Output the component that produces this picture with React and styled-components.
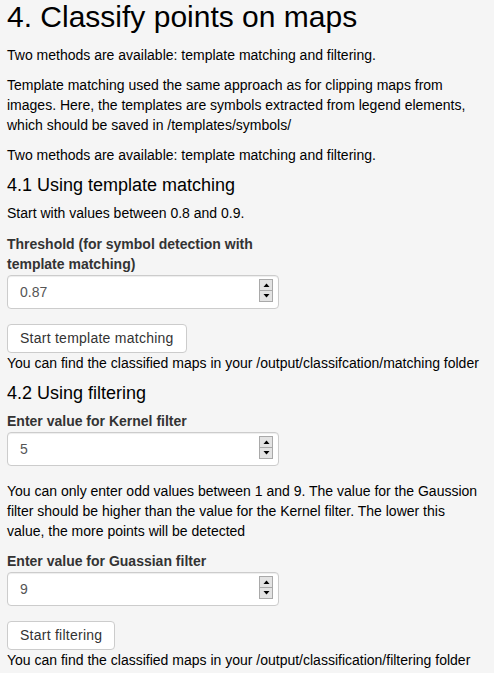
import React from 'react';
import styled, { createGlobalStyle } from 'styled-components';

const GlobalStyle = createGlobalStyle`
  html, body {
    margin: 0;
    padding: 0;
    background: #f5f5f5;
  }
  body {
    font-family: "Liberation Sans", Arial, Helvetica, sans-serif;
    font-size: 14px;
    line-height: 20px;
    color: #000;
  }
  * { box-sizing: border-box; }
`;

const Page = styled.main`
  padding: 0 11px 0 7px;
`;

const Title = styled.h2`
  font-size: 30px;
  font-weight: 400;
  line-height: 33px;
  margin: 0 0 12px;
  color: #000;
`;

const Subtitle = styled.h4`
  font-size: 18px;
  font-weight: 400;
  line-height: 19.8px;
  margin: 11px 0 7px;
  color: #000;
`;

const Text = styled.p`
  margin: 0 0 ${(p) => (p.$mb !== undefined ? p.$mb : 10)}px;
`;

const FormGroup = styled.div`
  width: 272px;
  margin-bottom: 15px;
`;

const Label = styled.label`
  display: block;
  font-weight: 700;
  color: #333;
  margin-bottom: 1px;
`;

const InputWrap = styled.div`
  position: relative;
`;

const NumberInput = styled.input`
  display: block;
  width: 100%;
  height: 34px;
  padding: 6px 12px;
  font-family: inherit;
  font-size: 14px;
  line-height: 20px;
  color: #555;
  background: #fff;
  border: 1px solid #ccc;
  border-radius: 4px;
  box-shadow: inset 0 1px 1px rgba(0, 0, 0, 0.075);
  outline: none;
`;

const Spinner = styled.div`
  position: absolute;
  top: 4px;
  right: 6px;
  width: 14px;
  height: 23px;
  display: flex;
  flex-direction: column;
  border: 1px solid #a9a9a9;
  background: #e3e3e3;
`;

const SpinButton = styled.div`
  flex: 1;
  display: flex;
  align-items: center;
  justify-content: center;
  border-top: ${(p) => (p.$down ? '1px solid #a9a9a9' : 'none')};
`;

const Button = styled.button`
  display: block;
  width: fit-content;
  padding: 4px 12px;
  font-family: inherit;
  font-size: 14px;
  line-height: 19px;
  letter-spacing: 0.25px;
  color: #333;
  background: #fff;
  border: 1px solid #ccc;
  border-radius: 4px;
  cursor: pointer;
`;

const Arrow = ({ down }) => (
  <svg width="7" height="4" viewBox="0 0 7 4">
    {down ? <polygon points="0.5,0 6.5,0 3.5,3.5" fill="#000" /> : <polygon points="3.5,0.5 6.5,4 0.5,4" fill="#000" />}
  </svg>
);

const NumberField = ({ label, value }) => (
  <FormGroup>
    <Label>{label}</Label>
    <InputWrap>
      <NumberInput type="text" defaultValue={value} />
      <Spinner>
        <SpinButton>
          <Arrow />
        </SpinButton>
        <SpinButton $down>
          <Arrow down />
        </SpinButton>
      </Spinner>
    </InputWrap>
  </FormGroup>
);

export default function App() {
  return (
    <>
      <GlobalStyle />
      <Page>
        <Title>4. Classify points on maps</Title>
        <Text>Two methods are available: template matching and filtering.</Text>
        <Text>
          Template matching used the same approach as for clipping maps from images. Here, the templates are symbols
          extracted from legend elements, which should be saved in /templates/symbols/
        </Text>
        <Text>Two methods are available: template matching and filtering.</Text>

        <Subtitle>4.1 Using template matching</Subtitle>
        <Text $mb={11}>Start with values between 0.8 and 0.9.</Text>
        <NumberField label="Threshold (for symbol detection with template matching)" value="0.87" />
        <Button>Start template matching</Button>
        <Text>You can find the classified maps in your /output/classifcation/matching folder</Text>

        <Subtitle>4.2 Using filtering</Subtitle>
        <NumberField label="Enter value for Kernel filter" value="5" />
        <Text>
          You can only enter odd values between 1 and 9. The value for the Gaussion filter should be higher than the
          value for the Kernel filter. The lower this value, the more points will be detected
        </Text>
        <NumberField label="Enter value for Guassian filter" value="9" />
        <Button>Start filtering</Button>
        <Text>You can find the classified maps in your /output/classification/filtering folder</Text>
      </Page>
    </>
  );
}
